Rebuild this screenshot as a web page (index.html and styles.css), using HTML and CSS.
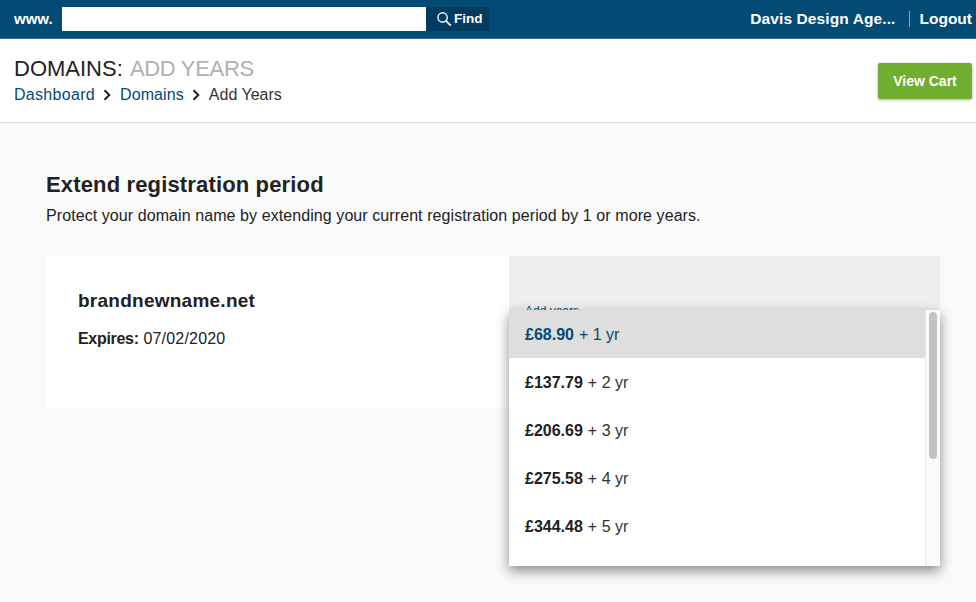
FILE: index.html
```
<!DOCTYPE html>
<html lang="en">
<head>
<meta charset="utf-8">
<title>Domains: Add Years</title>
<link rel="stylesheet" href="styles.css">
</head>
<body>
<header class="topbar">
  <form class="search">
    <span class="www">www.</span>
    <input class="search-input" type="text" aria-label="Domain">
    <button class="find" type="button">
      <svg class="find-icon" viewBox="0 0 16 16" width="16" height="16" aria-hidden="true"><circle cx="6.6" cy="6.4" r="4.6" fill="none" stroke="#fff" stroke-width="1.4"/><path d="M10 9.8l4.4 4.4" stroke="#fff" stroke-width="1.7" stroke-linecap="round"/></svg>
      Find
    </button>
  </form>
  <nav class="account">
    <span class="account-name">Davis Design Age...</span>
    <span class="account-sep"></span>
    <a class="logout">Logout</a>
  </nav>
</header>
<section class="page-head">
  <div>
    <h1 class="page-title">DOMAINS: <span class="page-title-sub">ADD YEARS</span></h1>
    <div class="crumbs">
      <a class="crumb-link crumb-wide">Dashboard</a>
      <svg class="chev" viewBox="0 0 8 12" width="8" height="12" aria-hidden="true"><path d="M1.5 1.2L6.3 6l-4.800 4.800" fill="none" stroke="#222" stroke-width="2"/></svg>
      <a class="crumb-link">Domains</a>
      <svg class="chev" viewBox="0 0 8 12" width="8" height="12" aria-hidden="true"><path d="M1.5 1.2L6.3 6l-4.800 4.800" fill="none" stroke="#222" stroke-width="2"/></svg>
      <span>Add Years</span>
    </div>
  </div>
  <button class="cart" type="button">View Cart</button>
</section>
<main class="content">
  <h2 class="section-title">Extend registration period</h2>
  <p class="section-text">Protect your domain name by extending your current registration period by 1 or more years.</p>
  <div class="panel">
    <div class="panel-info">
      <h3 class="domain">brandnewname.net</h3>
      <p class="expires"><b class="expires-label">Expires:</b> 07/02/2020</p>
    </div>
    <div class="panel-select">
      <span class="select-label">Add years</span>
      <div class="menu">
        <ul class="menu-list">
          <li class="menu-item is-selected"><b>£68.90</b> + 1 yr</li>
          <li class="menu-item"><b>£137.79</b> + 2 yr</li>
          <li class="menu-item"><b>£206.69</b> + 3 yr</li>
          <li class="menu-item"><b>£275.58</b> + 4 yr</li>
          <li class="menu-item"><b>£344.48</b> + 5 yr</li>
        </ul>
        <div class="scrolltrack"><div class="scrollthumb"></div></div>
      </div>
    </div>
  </div>
</main>
</body>
</html>
```
FILE: styles.css
```
* { box-sizing: border-box; }
html, body { margin: 0; height: 100%; }
body {
  font-family: "Liberation Sans", Arial, sans-serif;
  color: #222;
  background: #fafafa;
  overflow: hidden;
}
.topbar {
  height: 39px;
  background: #034a75;
  border-bottom: 1px solid #3a6a8c;
  display: flex;
  align-items: center;
  justify-content: space-between;
  padding: 0 4px 1px 14px;
  color: #fff;
  font-weight: 700;
  font-size: 15px;
}
.search { display: flex; align-items: center; height: 24px; margin: 0; }
.www { width: 48px; font-size: 15px; }
.search-input {
  width: 364px;
  height: 24px;
  border: 0;
  padding: 0;
  background: #fff;
  border-radius: 0;
}
.find {
  width: 63px;
  height: 24px;
  border: 0;
  background: #033a60;
  color: #fff;
  font: 700 13.5px "Liberation Sans", Arial, sans-serif;
  display: flex;
  align-items: center;
  padding: 0 0 0 10px;
  gap: 2px;
}
.find-icon { flex: none; }
.account { display: flex; align-items: center; font-size: 15.5px; }
.account-name { letter-spacing: .1px; }
.account-sep { width: 1px; height: 16px; background: #8aa6ba; margin: 0 9px 0 14px; }
.page-head {
  height: 84px;
  background: #fff;
  border-bottom: 1px solid #d8d8d8;
  display: flex;
  justify-content: space-between;
  align-items: flex-start;
  padding: 17px 4px 0 14px;
}
.page-title {
  margin: 0;
  font-size: 22px;
  font-weight: 400;
  line-height: 25px;
  color: #222;
}
.page-title-sub { color: #b0b0b0; margin-left: 1px; letter-spacing: -.3px; }
.crumbs {
  display: flex;
  align-items: center;
  margin-top: 4px;
  font-size: 16px;
  line-height: 20px;
  color: #333;
}
.crumb-link { color: #034a75; letter-spacing: .1px; }
.crumb-wide { letter-spacing: .3px; }
.chev { margin: 0 9px 0 8px; }
.cart {
  width: 94px;
  height: 36px;
  margin-top: 7px;
  border: 0;
  border-radius: 2px;
  background: #6fae2f;
  color: #fff;
  font: 700 14px "Liberation Sans", Arial, sans-serif;
  box-shadow: 0 1px 3px rgba(0, 0, 0, .35);
}
.content { padding: 49px 36px 0 46px; }
.section-title {
  margin: 0;
  font-size: 22px;
  line-height: 25px;
  font-weight: 700;
  color: #222;
  letter-spacing: .15px;
}
.section-text {
  margin: 9px 0 0;
  font-size: 16px;
  line-height: 20px;
  color: #222;
  letter-spacing: .08px;
}
.panel { display: flex; margin-top: 30px; align-items: flex-start; }
.panel-info {
  width: 463px;
  height: 153px;
  background: #fff;
  padding: 33px 32px 0;
}
.domain { margin: 0; font-size: 19px; line-height: 24px; font-weight: 700; letter-spacing: .25px; }
.expires { margin: 16px 0 0; font-size: 16px; line-height: 20px; letter-spacing: .2px; }
.expires-label { letter-spacing: -.3px; }
.panel-select {
  position: relative;
  width: 431px;
  height: 224px;
  background: #eee;
  padding: 48px 16px 0;
}
.select-label { font-size: 12px; line-height: 14px; color: #034a75; display: block; }
.menu {
  position: absolute;
  left: 0;
  top: 54px;
  width: 431px;
  height: 256px;
  background: #fff;
  box-shadow: 0 5px 12px rgba(0, 0, 0, .45);
  display: flex;
}
.menu-list { list-style: none; margin: 0; padding: 0; flex: 1; }
.menu-item {
  height: 48px;
  padding: 2px 16px 0;
  display: flex;
  align-items: center;
  gap: 5px;
  font-size: 16px;
  color: #333;
}
.menu-item b { color: #222; }
.is-selected { background: #dedede; color: #034a75; }
.is-selected b { color: #034a75; }
.scrolltrack {
  width: 15px;
  background: #fafafa;
  border-left: 1px solid #e8e8e8;
  padding: 2px 3px 0;
}
.scrollthumb { height: 147px; border-radius: 4px; background: #c2c2c2; }
```
